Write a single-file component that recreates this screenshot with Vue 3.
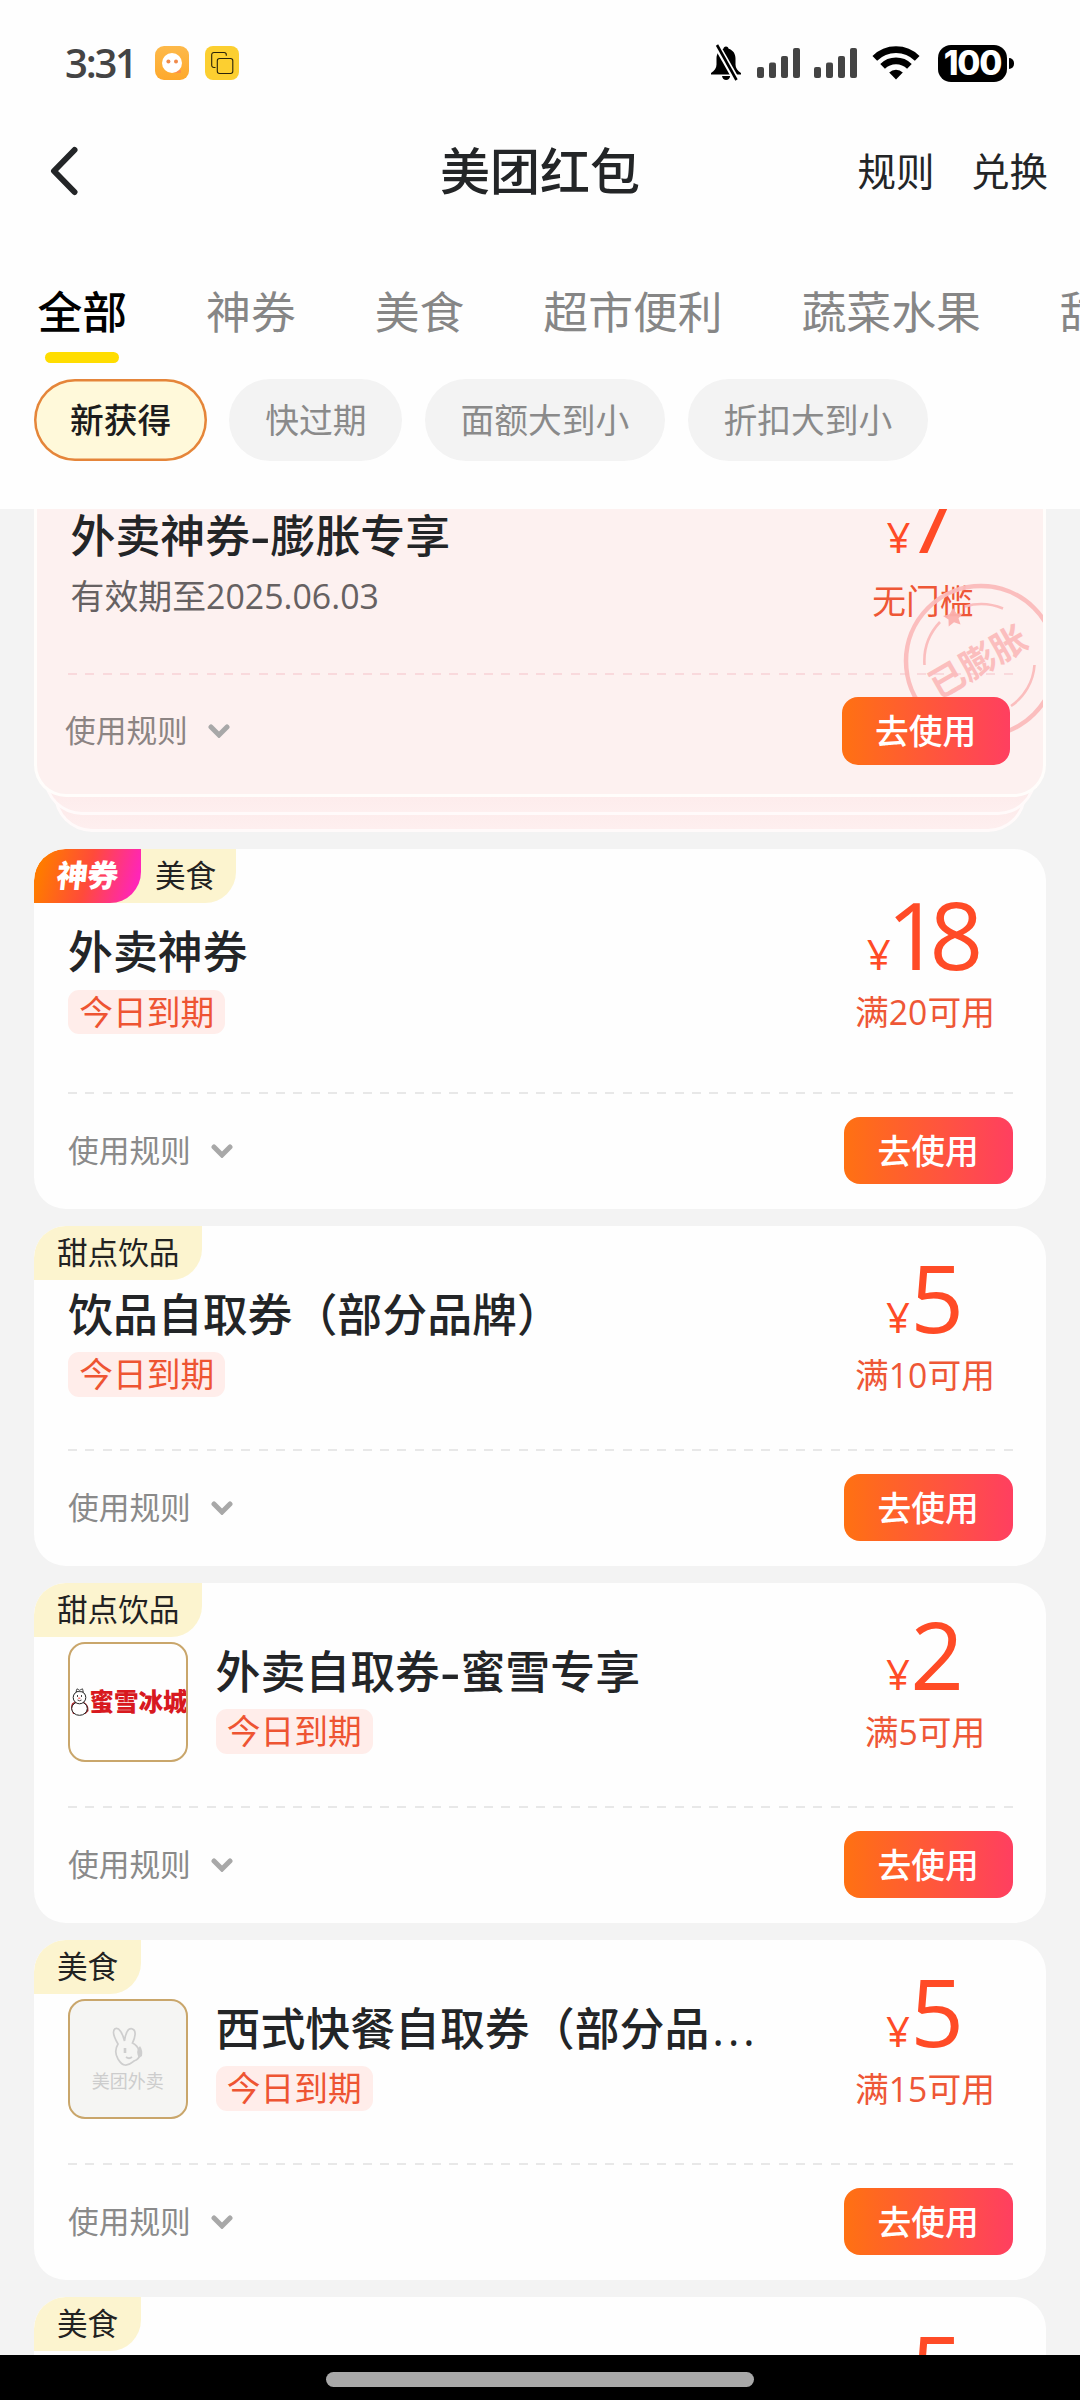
<script setup>
const tabs = ['全部', '神券', '美食', '超市便利', '蔬菜水果', '甜点饮品']
const filters = ['新获得', '快过期', '面额大到小', '折扣大到小']
const coupons = [
  { title: '外卖神券', category: '美食', amount: '18', condition: '满20可用', magic: true },
  { title: '饮品自取券（部分品牌）', category: '甜点饮品', amount: '5', condition: '满10可用' },
  { title: '外卖自取券-蜜雪专享', category: '甜点饮品', amount: '2', condition: '满5可用', logo: 'mixue' },
  { title: '西式快餐自取券（部分品...', category: '美食', amount: '5', condition: '满15可用', logo: 'waimai' },
  { title: '西式快餐自取券（部分品...', category: '美食', amount: '5', condition: '满15可用', logo: 'waimai' },
]
const splitTitle = (t) => t.split(/(-|\.\.\.)/).filter(Boolean)
</script>

<template>
  <div class="screen">
    <header class="top">
      <div class="status">
        <span class="time">3:31</span>
        <svg class="app" width="34" height="34" viewBox="0 0 34 34">
          <defs>
            <linearGradient id="chat" x1="0" y1="0" x2="0" y2="1">
              <stop offset="0" stop-color="#fdb94a" /><stop offset="1" stop-color="#fea92c" />
            </linearGradient>
          </defs>
          <rect width="34" height="34" rx="9" fill="url(#chat)" />
          <path d="M19 24h7v3h-7z" fill="#ff9147" />
          <circle cx="17" cy="17" r="10" fill="#fff" />
          <circle cx="13.4" cy="15.6" r="2" fill="#f08a4a" /><circle cx="21" cy="15.6" r="2" fill="#f08a4a" />
        </svg>
        <svg class="app" width="34" height="34" viewBox="0 0 34 34">
          <rect width="34" height="34" rx="8" fill="#fccf30" />
          <g fill="none" stroke="#2a230a" stroke-width="1.1">
            <path d="M10.5 21.5h-1.6a2.2 2.2 0 0 1-2.2-2.2V8.7A2.2 2.2 0 0 1 8.900 6.500h10.200a2.200 2.200 0 0 1 2.200 2.200v1" />
            <rect x="12.300" y="12.500" width="15.500" height="15" rx="2.200" />
          </g>
        </svg>
        <div class="system">
          <svg width="32" height="38" viewBox="0 0 32 38" class="bell">
            <path d="M16 2.500c1.600 0 2.500 1 2.600 2.300 4.500 1.300 6.900 5 6.900 9.700v6c0 3.600 2 6.500 5.500 8.500v1.500H1v-1.500c3.500-2 5.500-4.900 5.500-8.500v-6c0-4.700 2.400-8.400 6.900-9.700C13.500 3.500 14.400 2.500 16 2.500z" />
            <path d="M12 32h8.200c-.4 2.500-2 4-4.100 4s-3.700-1.500-4.100-4z" />
            <path d="M6.500 1 27 37" stroke="#fff" stroke-width="6.500" />
            <path d="M7 1 26.500 36" stroke="#000" stroke-width="2.600" />
          </svg>
          <svg v-for="n in 2" :key="n" width="43" height="30" viewBox="0 0 43 30" :class="'sig' + n" fill="#444">
            <rect x="0" y="19" width="7" height="11" rx="2" /><rect x="12" y="14.600" width="7" height="15.400" rx="2" />
            <rect x="24" y="8" width="7" height="22" rx="2" /><rect x="36" y="0" width="7" height="30" rx="2" />
          </svg>
          <svg width="48" height="35" viewBox="0 0 48 35" class="wifi">
            <g fill="none" stroke="#000" stroke-width="6.600">
              <path d="M2.800 13.400a30 30 0 0 1 42.400 0" /><path d="M10.600 21.400a19 19 0 0 1 26.800 0" />
            </g>
            <path d="M24 34.500 17.200 27.500a9.600 9.600 0 0 1 13.600 0z" />
          </svg>
          <span class="battery">100</span><i class="nub"></i>
        </div>
      </div>
      <nav class="bar">
        <svg class="back" width="30" height="50" viewBox="0 0 30 50">
          <path d="M25.500 4 5 25l20.500 21" fill="none" stroke="#232527" stroke-width="6" stroke-linecap="round" stroke-linejoin="round" />
        </svg>
        <h1>美团红包</h1>
        <div class="actions"><span>规则</span><span>兑换</span></div>
      </nav>
      <div class="tabs">
        <span v-for="(t, i) in tabs" :key="t" :class="{ on: i === 0 }">{{ t }}</span>
      </div>
      <div class="chips">
        <span v-for="(f, i) in filters" :key="f" :class="{ on: i === 0 }">{{ f }}</span>
      </div>
    </header>

    <main class="list">
      <section class="stack">
        <i class="layer l3"></i><i class="layer l2"></i>
        <article class="card inflated">
          <div class="body">
            <div class="info">
              <h2>外卖神券<b class="dash">-</b>膨胀专享</h2>
              <p class="date">有效期至2025.06.03</p>
            </div>
            <div class="value">
              <div class="amount seven"><small>¥</small>7</div>
              <div class="cond">无门槛</div>
            </div>
          </div>
          <svg class="stamp" width="156" height="156" viewBox="-78 -78 156 156">
            <g fill="none" stroke="#fbbcbc">
              <circle r="75" stroke-width="4.500" />
              <path d="M-56.500 4A57 57 0 0 1-41-39M-16-54.500A57 57 0 0 1 22-52.500M53.500 4A54 54 0 0 1 30 45" stroke-width="2.600" />
            </g>
            <path d="m-28-53 3.500 5.500 6.500 0-4.500 4.700 2 6.300-6.500-2.300-5.300 4.300-.2-7-5.500-3.500 6.500-1.800z" fill="#fbb0ae" />
            <text transform="rotate(-30)" x="-3" y="12" text-anchor="middle">已膨胀</text>
          </svg>
          <div class="rule-line"></div>
          <div class="foot">
            <span class="rules">使用规则</span>
            <svg class="chev" width="22" height="14" viewBox="0 0 22 14"><path d="m3 3 8 8 8-8" /></svg>
            <button>去使用</button>
          </div>
        </article>
      </section>

      <article v-for="(c, k) in coupons" :key="k" class="card" :class="{ tall: c.magic }">
        <div class="badge">
          <span v-if="c.magic" class="magic"><em>神券</em></span>
          <span class="cat">{{ c.category }}</span>
        </div>
        <div class="body">
          <div v-if="c.logo === 'mixue'" class="logo">
            <div class="mixue">
              <svg width="20" height="28" viewBox="0 0 20 28">
                <path d="M1 20q0-6 4-6h9q5 3 4.500 9l-3 3H3z" fill="#b3262c" />
                <ellipse cx="9.500" cy="20.500" rx="7.800" ry="6.800" fill="#fff" stroke="#222" stroke-width="1" />
                <circle cx="9.500" cy="9.500" r="6.300" fill="#fff" stroke="#222" stroke-width="1" />
                <path d="M6 3.500 7 .8l2.500 1.500L12.500.8l.8 3z" fill="#fff" stroke="#222" stroke-width=".8" />
                <path d="M7.500 7v2M11.500 7v2M7.500 12q2 1.500 4 0" fill="none" stroke="#333" stroke-width=".9" />
                <path d="m8.500 9.500 2.500.6-2.500.8z" fill="#e22" />
              </svg>
              <b>蜜雪冰城</b>
            </div>
          </div>
          <div v-else-if="c.logo" class="logo waimai">
            <svg width="34" height="40" viewBox="0 0 34 40" fill="none" stroke="#cecece" stroke-width="1.700">
              <path d="M7 17C3.500 11 1 4 4 1.800 8 0 11.500 6 13.500 14 14.500 6 17 1 21 1.800 26 3 24 11 21.500 16q5 2.500 6.500 7.500c2 6-1 9-5 10.500-2.500 2-5 4.500-9 4-4-.4-5-3-7-6C4 27 4 22 7 17z" />
              <path d="M29 19q3 4 2 10l-3 2q-4-7 1-12z" fill="#cecece" stroke="none" />
              <path d="M14 21v5" stroke-width="2.600" /><path d="M15 30q3 2.500 6 0" />
            </svg>
            <span>美团外卖</span>
          </div>
          <div class="info">
            <h2><template v-for="(s, j) in splitTitle(c.title)" :key="j"><b v-if="s === '-'" class="dash">-</b><b v-else-if="s === '...'" class="dots">...</b><template v-else>{{ s }}</template></template></h2>
            <span class="due">今日到期</span>
          </div>
          <div class="value">
            <div class="amount" :class="{ two: c.amount.length > 1 }"><small>¥</small>{{ c.amount }}</div>
            <div class="cond">{{ c.condition }}</div>
          </div>
        </div>
        <div class="rule-line"></div>
        <div class="foot">
          <span class="rules">使用规则</span>
          <svg class="chev" width="22" height="14" viewBox="0 0 22 14"><path d="m3 3 8 8 8-8" /></svg>
          <button>去使用</button>
        </div>
      </article>
    </main>
    <footer class="home"><i></i></footer>
  </div>
</template>

<style>
body { margin: 0; background: #fff; }
</style>

<style scoped>
.screen {
  width: 1080px; height: 2400px; overflow: hidden; display: flex; flex-direction: column;
  font-family: "Open Sans", "Noto Sans CJK SC", sans-serif; color: #232527; background: #f3f3f3;
}
h1, h2, p { margin: 0; }
.top { height: 509px; flex: none; background: #fefefe; box-sizing: border-box; overflow: hidden; }
.status { height: 126px; display: flex; align-items: center; padding-left: 65px; }
.time { font-size: 40px; line-height: 50px; width: 90px; color: #444; font-weight: 550; letter-spacing: -2.200px; }
.app { margin-right: 16px; }
.system { margin-left: auto; display: flex; align-items: center; padding-right: 66px; }
.sig1 { margin-left: 15px; }
.sig2 { margin-left: 14px; }
.wifi { margin: -1px 0 0 15px; }
.battery {
  margin-left: 18px; width: 69px; height: 37px; border-radius: 13px; background: #000; color: #fff;
  font: 800 33.500px/37px Inter, sans-serif; letter-spacing: -1.200px; text-align: center;
}
.nub { width: 5px; height: 11px; margin-left: 2px; background: #000; border-radius: 0 5px 5px 0; }
.bar { height: 89px; display: flex; align-items: center; justify-content: space-between; position: relative; padding: 0 32px 0 49px; }
h1 { position: absolute; left: 0; right: 0; text-align: center; font-size: 50px; line-height: 60px; font-weight: 500; pointer-events: none; }
.actions { display: flex; gap: 36.500px; font-size: 38.500px; line-height: 50px; }
.tabs { display: flex; gap: 79px; padding: 66.500px 0 0 37.500px; white-space: nowrap; font-size: 44.800px; line-height: 60px; color: #868686; }
.tabs span { flex: none; }
.tabs .on { color: #000; font-weight: 500; }
.tabs .on::after { content: ""; display: block; width: 74px; height: 11.500px; margin: 10px auto 0; border-radius: 6px; background: #fd0; }
.chips { display: flex; gap: 22.300px; padding: 16px 34px 0; }
.chips span {
  height: 82px; line-height: 82px; padding: 0 35.900px; border-radius: 41px; background: #f3f3f3; color: #8a8a8a; font-size: 33.750px;
}
.chips .on { background: #fff9da; color: #1c1c1c; box-shadow: inset 0 0 0 2.500px #e5853a; font-weight: 500; }

.list { flex: 1; min-height: 0; overflow: hidden; padding: 0 34px; display: flex; flex-direction: column; gap: 17px; }
.stack { position: relative; flex: none; margin-top: -61.600px; padding-bottom: 35.300px; }
.layer { position: absolute; height: 120px; box-sizing: border-box; border: 3px solid #fffafa; border-top: 0; background: linear-gradient(#fdecec 86%, #feefef); }
.l2 { left: 10px; right: 10px; bottom: 17.300px; border-radius: 0 0 38px 38px; }
.l3 { left: 20px; right: 20px; bottom: 0; border-radius: 0 0 38px 38px; }
.card { position: relative; flex: none; height: 340px; border-radius: 32px; background: #fefefe; overflow: hidden; box-sizing: border-box; }
.tall { height: 360px; }
.body { height: 222.500px; display: flex; box-sizing: border-box; padding-left: 34px; }
.tall .body { height: 242.500px; padding-top: 14.500px; }
.info { flex: 1; padding-top: 58.600px; white-space: nowrap; }
h2 { font-size: 44.900px; line-height: 60px; font-weight: 500; }
.dash { font-weight: 600; display: inline-block; width: 20.500px; line-height: 50px; text-align: center; transform: scaleX(1.350); }
.dots { font-weight: 500; letter-spacing: 3.600px; margin-left: 3px; }
.due {
  display: block; width: max-content; margin-top: 7.400px; padding: 0 11.200px; height: 44.500px; line-height: 45.500px; border-radius: 11px;
  background: #ffedea; color: #ee5432; font-size: 33.750px;
}
.value { width: 242px; padding-top: 23.600px; text-align: center; color: #ee5736; }
.amount { font-size: 94px; line-height: 94px; height: 94px; color: #ff4b26; white-space: nowrap; font-weight: 500; }
.amount small { font-size: 42px; line-height: 0; font-weight: 400; }
.two { letter-spacing: -11px; padding-right: 11px; }
.two small { letter-spacing: -4px; }
.seven small { letter-spacing: -5px; }
.cond { margin-top: 11px; font-size: 33.750px; line-height: 40px; }
.rule-line { height: 2px; margin: 0 33.500px; background: repeating-linear-gradient(90deg, #e8e8e8 0 9px, transparent 9px 17.330px); }
.foot { display: flex; align-items: center; padding: 23px 33.500px 0 34px; }
.rules { font-size: 30.700px; line-height: 40px; margin-top: -2px; color: #8a8a8a; }
.chev { margin: 1px 0 0 20.500px; }
.chev path { fill: none; stroke: #a8a8a8; stroke-width: 5; stroke-linecap: round; stroke-linejoin: miter; }
button {
  margin-left: auto; width: 168.500px; height: 67.500px; border: 0; border-radius: 16px; padding: 0; color: #fff;
  background: linear-gradient(90deg, #ff7112, #ff3f60); font: 500 33.750px/66px "Open Sans", "Noto Sans CJK SC", sans-serif; position: relative;
}
.inflated { height: 349.600px; background: #fdf1f0; border: 3px solid #fffdfb; border-top: 0; border-radius: 0 0 32px 32px; }
.inflated .body { height: 225.500px; padding-left: 33.500px; }
.inflated .value { width: 240px; padding-top: 22.200px; }
.inflated .cond { margin-top: 17px; }
.inflated .rule-line { margin: 0 30.500px; background: repeating-linear-gradient(90deg, #f9d9dc 0 9px, transparent 9px 17.330px); }
.inflated .foot { padding: 22.300px 33px 0 28px; }
.inflated .rules { color: #8c8483; }
.date { font-size: 33.900px; line-height: 40px; margin-top: 9.500px; color: #666162; }
.stamp { position: absolute; right: -16px; top: 136px; opacity: .95; }
.stamp text { font: 700 35.500px "Noto Sans CJK SC", sans-serif; fill: #fbbcbc; }
.badge { position: absolute; left: 0; top: 0; height: 53.500px; display: flex; border-radius: 31px 0 31px 0; background: #fcf4cf; overflow: hidden; color: #222; }
.cat { font-size: 30.600px; line-height: 52px; padding: 0 23px; }
.magic { width: 107px; border-radius: 31px 0 31px 0; background: linear-gradient(105deg, #ff7a00 10%, #ff4b3a 50%, #ff25b8 92%); text-align: center; }
.magic em { font-size: 31px; line-height: 52px; font-weight: 900; color: #fff; display: inline-block; transform: skewX(-6deg); font-style: normal; letter-spacing: -.5px; }
.magic + .cat { padding: 0 20px 0 14px; }
.logo { width: 120.500px; height: 120.500px; margin: 58.600px 27.500px 0 -.5px; flex: none; box-sizing: border-box; border: 2px solid #c9a66b; border-radius: 17px; overflow: hidden; display: flex; flex-direction: column; justify-content: center; }
.mixue { display: flex; align-items: center; }
.mixue b { font: 900 24.500px/30px "Noto Sans CJK SC", sans-serif; color: #d8191f; white-space: nowrap; margin: -2px 0 0 0; }
.mixue svg { flex: none; }
.waimai { background: #f5f5f3; align-items: center; }
.waimai span { font-size: 18px; line-height: 22px; color: #cdcdcd; margin-top: 3px; }
.home { flex: none; height: 45px; background: #000; display: flex; justify-content: center; align-items: center; }
.home i { width: 428px; height: 15.500px; border-radius: 8px; background: #a8a8a8; margin-top: 4px; }
</style>
